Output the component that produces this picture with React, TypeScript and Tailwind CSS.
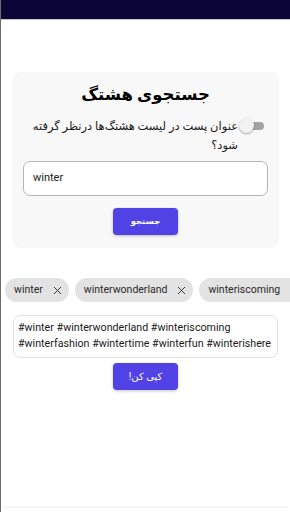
import { X } from 'lucide-react';

const tags = ['winter', 'winterwonderland', 'winteriscoming', 'winterfashion'];

function Toggle() {
  return (
    <div className="relative w-[25px] h-[15px] shrink-0">
      <div className="absolute right-0 top-[4px] w-[20px] h-[8px] rounded-full bg-[#a3a3a3]" />
      <div className="absolute left-0 top-0 w-[15px] h-[15px] rounded-full bg-[#f2f2f2] shadow-[0_1px_2px_rgba(0,0,0,0.35)]" />
    </div>
  );
}

export default function App() {
  return (
    <div
      dir="rtl"
      className="w-[290px] h-[512px] flex flex-col bg-white border-l border-[#6b6b6b] overflow-hidden"
      style={{ fontFamily: "Roboto, 'DejaVu Sans', sans-serif" }}
    >
      {/* top bar */}
      <div className="h-[20px] bg-[#0b0638] border-b border-[#c8c8c8] shrink-0" />

      <div className="flex-1 flex flex-col">
        {/* search card */}
        <div className="mx-[11px] mt-[52px] bg-[#f8f8f8] rounded-[8px] flex flex-col items-center pt-[10px] pb-[13px] px-[11px]">
          <h1 className="text-[16.5px] font-bold text-black leading-[26px]">جستجوی هشتگ</h1>
          <div className="mt-[9px] flex items-start gap-[1px] self-stretch pr-[4px]">
            <div className="pt-[1px]">
              <Toggle />
            </div>
            <p className="text-[11.5px] leading-[19px] text-[#1a1a1a]">
              عنوان پست در لیست هشتگ‌ها درنظر گرفته شود؟
            </p>
          </div>
          <div
            dir="ltr"
            className="mt-[6px] self-stretch h-[35px] border border-[#b5b5b5] rounded-[7px] bg-white flex items-center px-[9px] text-[11px] text-[#222]"
          >
            winter
          </div>
          <button className="mt-[12px] w-[65px] h-[27px] rounded-[4px] bg-[#5142e6] text-white text-[8.5px] font-bold shadow-[0_1px_3px_rgba(0,0,0,0.25)]">
            جستجو
          </button>
        </div>

        {/* tag chips */}
        <div dir="ltr" className="mt-[30px] flex gap-[6px] pl-[4px] overflow-hidden whitespace-nowrap">
          {tags.map((t) => (
            <div
              key={t}
              className="h-[24px] shrink-0 rounded-full bg-[#e3e3e3] flex items-center pl-[9px] pr-[5px] text-[10.5px] text-[#2a2a2a]"
            >
              <span>{t}</span>
              <X className="ml-[8px] w-[13px] h-[13px] text-[#333]" strokeWidth={1.8} />
            </div>
          ))}
        </div>

        {/* result */}
        <div
          dir="ltr"
          className="mx-[12px] mt-[13px] h-[43px] border border-[#e2e2e2] rounded-[7px] bg-white px-[4px] pt-[4px] text-[10.7px] leading-[16px] text-[#1a1a1a] whitespace-nowrap overflow-hidden"
        >
          #winter #winterwonderland #winteriscoming
          <br />
          #winterfashion #wintertime #winterfun #winterishere
        </div>
        <div className="flex justify-center mt-[5px]">
          <button className="w-[65px] h-[27px] rounded-[4px] bg-[#5142e6] text-white text-[10px] shadow-[0_1px_3px_rgba(0,0,0,0.25)]">
            کپی کن!
          </button>
        </div>

        <div className="mt-auto mb-[4px] mx-[2px] h-[2px] bg-[#f6f6f6]" />
      </div>
    </div>
  );
}
